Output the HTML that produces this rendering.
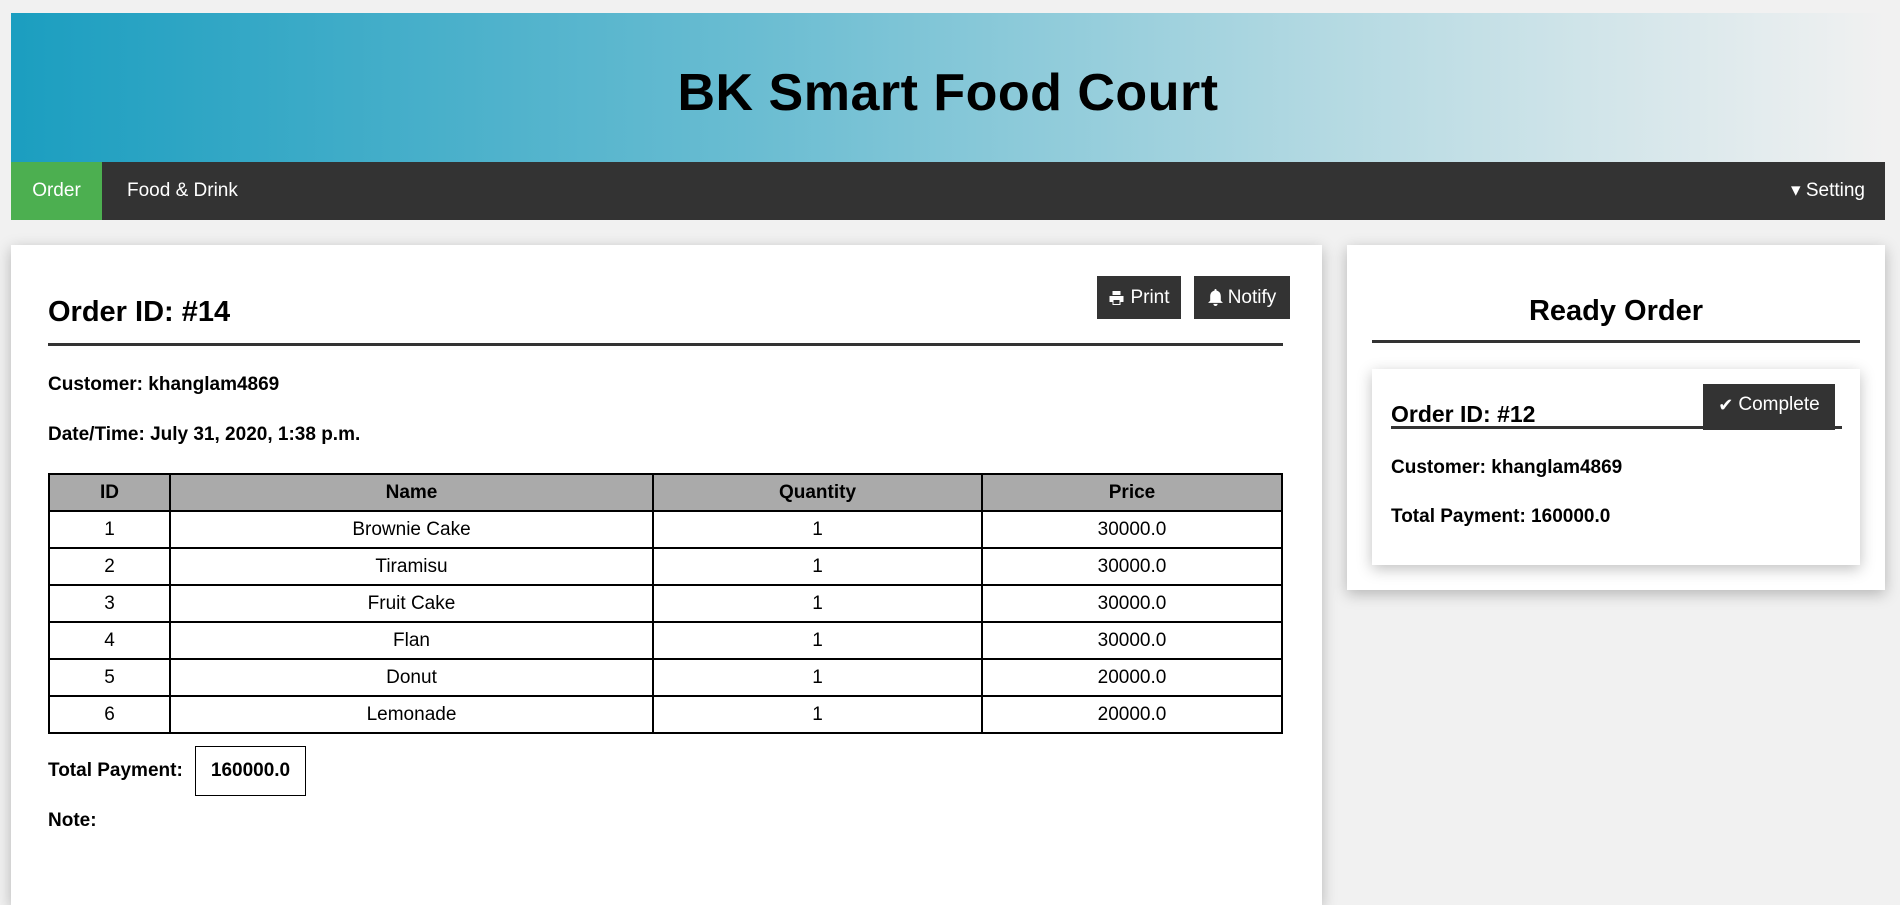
<!DOCTYPE html>
<html><head><style>
*{box-sizing:border-box;margin:0;padding:0}
body{width:1900px;height:887px;background:#f1f1f1;font-family:"Liberation Sans",Arial,sans-serif;position:relative;overflow:hidden;color:#000}
.hdr{position:absolute;left:11px;top:13px;width:1874px;height:149px;background:linear-gradient(90deg,#1b9ec0 0%,#6bbdd2 40%,#b3d9e2 70%,#f1f1f1 100%)}
.hdr h1{position:absolute;left:0;right:0;top:50px;text-align:center;font-family:"Comic Sans MS","Liberation Sans",sans-serif;font-weight:bold;font-size:52px;letter-spacing:0.5px}
.nav{position:absolute;left:11px;top:162px;width:1874px;height:58px;background:#333;color:#fff;font-size:19px}
.nav .a{position:absolute;left:0;top:0;width:91px;height:58px;background:#4caf50;text-align:center;line-height:58px}
.nav .b{position:absolute;left:116px;line-height:58px}
.nav .c{position:absolute;right:20px;line-height:58px}
.panel{position:absolute;background:#fff;box-shadow:0 4px 14px rgba(0,0,0,.25)}
.t{position:absolute;font-size:19px;font-weight:bold}
table{position:absolute;left:48px;top:473px;width:1235px;border-collapse:collapse;font-size:19px}
td,th{border:2px solid #000;height:37px;text-align:center}
th{background:#aaa}
.btn{position:absolute;background:#333;color:#fff;font-size:19px;display:flex;align-items:center;justify-content:center;gap:5px}
</style></head><body>
<div class="hdr"><h1>BK Smart Food Court</h1></div>
<div class="nav"><div class="a">Order</div><div class="b">Food &amp; Drink</div><div class="c">▾ Setting</div></div>

<div class="panel" style="left:11px;top:245px;width:1311px;height:660px">
</div>
<div class="t" style="left:48px;top:296px;font-size:29px">Order ID: #14</div>
<div style="position:absolute;left:48px;top:343px;width:1235px;height:3px;background:#333"></div>
<div class="btn" style="left:1097px;top:276px;width:84px;height:43px"><svg width="17" height="16" viewBox="0 0 16 16"><path d="M4 1h8v4H4z M1 6h14v6h-3v3H4v-3H1z" fill="#fff"/><rect x="5" y="10" width="6" height="4" fill="#333"/></svg>Print</div>
<div class="btn" style="left:1194px;top:276px;width:96px;height:43px"><svg width="15" height="17" viewBox="0 0 14 16"><path d="M7 0c1 0 1 1 1 1.5C10.5 2 12 4 12 7v4l2 2H0l2-2V7c0-3 1.5-5 4-5.5C6 1 6 0 7 0z M5 14h4a2 2 0 0 1-4 0z" fill="#fff"/></svg>Notify</div>
<div class="t" style="left:48px;top:374px">Customer: khanglam4869</div>
<div class="t" style="left:48px;top:424px">Date/Time: July 31, 2020, 1:38 p.m.</div>
<table>
<tr><th style="width:121px">ID</th><th style="width:483px">Name</th><th style="width:329px">Quantity</th><th>Price</th></tr>
<tr><td>1</td><td>Brownie Cake</td><td>1</td><td>30000.0</td></tr>
<tr><td>2</td><td>Tiramisu</td><td>1</td><td>30000.0</td></tr>
<tr><td>3</td><td>Fruit Cake</td><td>1</td><td>30000.0</td></tr>
<tr><td>4</td><td>Flan</td><td>1</td><td>30000.0</td></tr>
<tr><td>5</td><td>Donut</td><td>1</td><td>20000.0</td></tr>
<tr><td>6</td><td>Lemonade</td><td>1</td><td>20000.0</td></tr>
</table>
<div class="t" style="left:48px;top:760px">Total Payment:</div>
<div class="t" style="left:195px;top:746px;width:111px;height:50px;border:1px solid #000;text-align:center;line-height:48px">160000.0</div>
<div class="t" style="left:48px;top:810px">Note:</div>

<div class="panel" style="left:1347px;top:245px;width:538px;height:345px"></div>
<div class="t" style="left:1347px;width:538px;text-align:center;top:295px;font-size:29px">Ready Order</div>
<div style="position:absolute;left:1372px;top:340px;width:488px;height:3px;background:#333"></div>
<div class="panel" style="left:1372px;top:369px;width:488px;height:196px"></div>
<div class="t" style="left:1391px;top:401px;font-size:23px">Order ID: #12</div>
<div style="position:absolute;left:1391px;top:426px;width:451px;height:3px;background:#333"></div>
<div class="btn" style="left:1703px;top:384px;width:132px;height:46px;padding-bottom:4px"><span style="font-size:18px">✔</span>Complete</div>
<div class="t" style="left:1391px;top:457px">Customer: khanglam4869</div>
<div class="t" style="left:1391px;top:506px">Total Payment: 160000.0</div>
</body></html>
